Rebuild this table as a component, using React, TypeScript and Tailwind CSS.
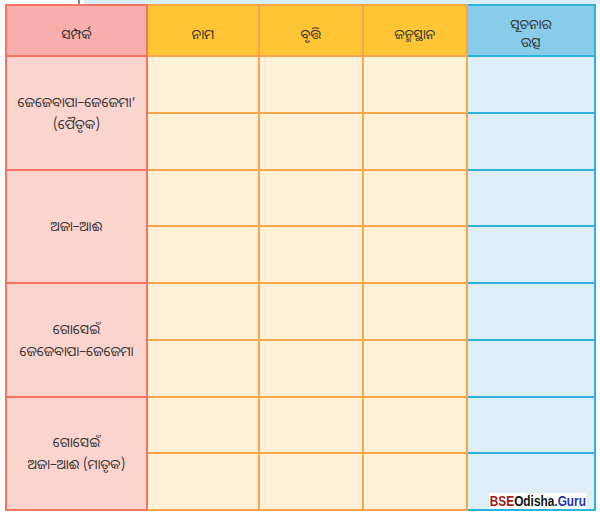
import React from "react";

const RED = "border-[#f47563]";
const ORG = "border-[#f9a54c]";
const BLU = "border-[#2bb3db]";

const groups = [
  ["ଜେଜେବାପା–ଜେଜେମା’", "(ପୈତୃକ)"],
  ["ଅଜା–ଆଈ"],
  ["ଗୋସେଇଁ", "ଜେଜେବାପା–ଜେଜେମା"],
  ["ଗୋସେଇଁ", "ଅଜା–ଆଈ (ମାତୃକ)"],
];

export default function App() {
  const font = { fontFamily: '"Noto Sans Oriya", "Noto Sans", "DejaVu Sans", sans-serif' };
  return (
    <div className="w-[600px] h-[517px] bg-white relative overflow-hidden" style={font}>
      <div className="flex h-[4px]">
        <div className="w-[78px]" />
        <div className="w-[2px] bg-[#8a8a8a]" />
        <div className="w-[4px]" />
        <div className="flex-1 bg-[#d9eef6]" />
      </div>
      <div
        className="ml-[5px] grid text-[13.5px] text-[#333] leading-[18px]"
        style={{
          gridTemplateColumns: "143px 112px 104px 104px 128px",
          gridTemplateRows: "53px repeat(8, 56.75px)",
          width: 591,
        }}
      >
        {/* header */}
        <div className={`row-start-1 col-start-1 border-2 ${RED} bg-[#f8aeaa] flex items-center justify-center pt-[6px]`}>ସମ୍ପର୍କ</div>
        <div className={`row-start-1 col-start-2 border-t-2 border-b-2 border-r-2 ${ORG} bg-[#ffc534] flex items-center justify-center pt-[6px]`}>ନାମ</div>
        <div className={`row-start-1 col-start-3 border-t-2 border-b-2 border-r-2 ${ORG} bg-[#ffc534] flex items-center justify-center pt-[6px]`}>ବୃତ୍ତି</div>
        <div className={`row-start-1 col-start-4 border-t-2 border-b-2 border-r-2 ${ORG} bg-[#ffc534] flex items-center justify-center pt-[6px]`}>ଜନ୍ମସ୍ଥାନ</div>
        <div className={`row-start-1 col-start-5 border-t-2 border-b-2 border-r-2 ${BLU} bg-[#88cce9] flex flex-col items-center justify-center pt-[4px]`}>
          <span>ସୂଚନାର</span>
          <span>ଉତ୍ସ</span>
        </div>
        {groups.map((g, i) => (
          <React.Fragment key={i}>
            <div
              className={`col-start-1 border-l-2 border-r-2 border-b-2 ${RED} bg-[#fcd4ce] flex flex-col items-center justify-center text-center leading-[22px]`}
              style={{ gridRow: `${2 + i * 2} / span 2` }}
            >
              {g.map((t, j) => (
                <span key={j}>{t}</span>
              ))}
            </div>
            {[0, 1].map((s) => (
              <React.Fragment key={s}>
                {[2, 3, 4].map((c) => (
                  <div
                    key={c}
                    className={`border-r-2 border-b-2 ${ORG} bg-[#fef1d7]`}
                    style={{ gridRow: 2 + i * 2 + s, gridColumn: c }}
                  />
                ))}
                <div
                  className={`border-r-2 border-b-2 ${BLU} bg-[#deeef7]`}
                  style={{ gridRow: 2 + i * 2 + s, gridColumn: 5 }}
                />
              </React.Fragment>
            ))}
          </React.Fragment>
        ))}
      </div>
      <div
        className="absolute left-[489px] top-[493px] bg-white px-[1px] text-[15px] font-bold leading-[16px] whitespace-nowrap origin-left scale-x-[0.79]"
        style={{ fontFamily: '"Liberation Sans", Arial, sans-serif' }}
      >
        <span className="text-[#a11b1b]">BSE</span>
        <span className="text-[#111]">Odisha</span>
        <span className="text-[#2233b0]">.Guru</span>
      </div>
    </div>
  );
}
